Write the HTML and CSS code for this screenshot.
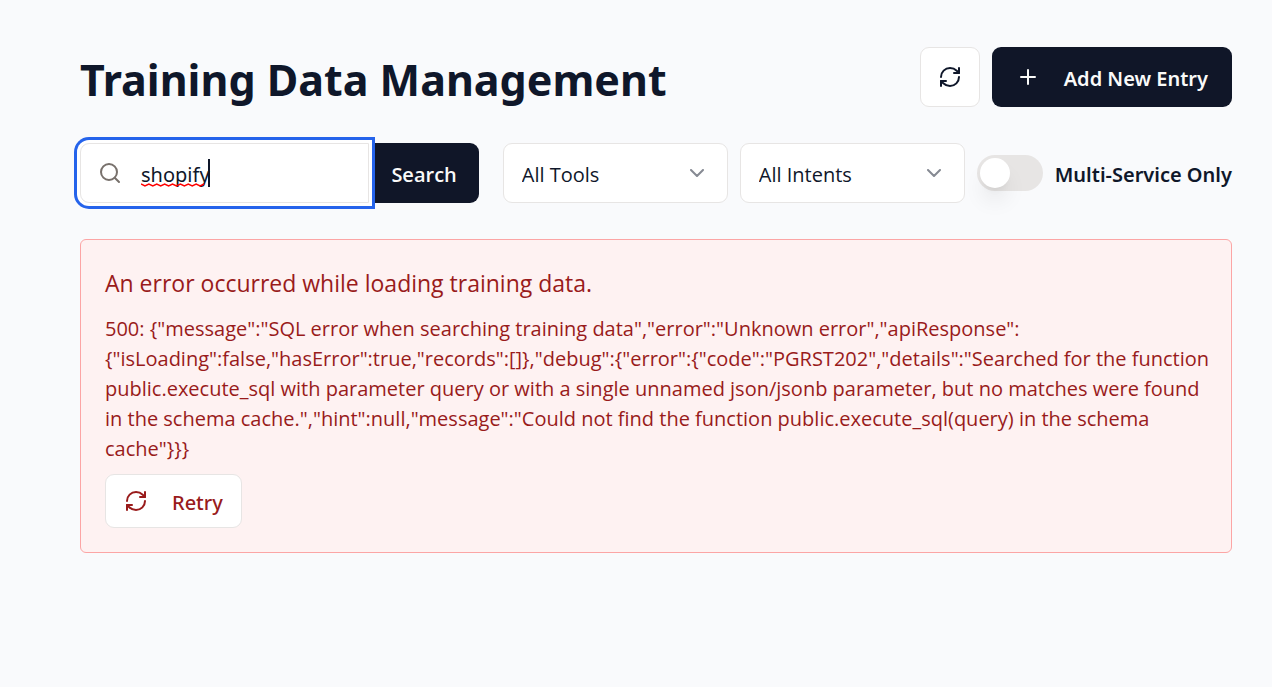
FILE: index.html
```html
<!DOCTYPE html>
<html lang="en">
<head>
<meta charset="utf-8">
<meta name="viewport" content="width=device-width, initial-scale=1">
<title>Training Data Management</title>
<link rel="stylesheet" href="styles.css">
</head>
<body>
<svg class="sprite" aria-hidden="true">
  <symbol id="refresh" viewBox="0 0 24 24"><path d="M3 12a9 9 0 0 1 9-9 9.75 9.75 0 0 1 6.74 2.74L21 8"/><path d="M21 3v5h-5"/><path d="M21 12a9 9 0 0 1-9 9 9.75 9.75 0 0 1-6.74-2.74L3 16"/><path d="M8 16H3v5"/></symbol>
  <symbol id="chevron" viewBox="0 0 24 24"><path d="m6 9 6 6 6-6"/></symbol>
</svg>
<main class="page">
  <header class="header">
    <h1 class="title">Training Data Management</h1>
    <div class="actions">
      <button class="button button-outline button-icon" type="button" aria-label="Refresh"><svg class="icon" aria-hidden="true"><use href="#refresh"/></svg></button>
      <button class="button button-primary" type="button"><svg class="icon" viewBox="0 0 24 24" aria-hidden="true"><path d="M5 12h14M12 5v14"/></svg><span class="label">Add New Entry</span></button>
    </div>
  </header>

  <div class="filters">
    <form class="search">
      <div class="search-field">
        <input class="search-input" id="search" type="text" value="shopify" aria-label="Search training data">
        <svg class="icon search-icon" viewBox="0 0 24 24" aria-hidden="true"><circle cx="11" cy="11" r="8"/><path d="m21 21-4.3-4.3"/></svg>
        <span class="caret" aria-hidden="true"><svg class="squiggle" viewBox="0 0 68 4"><path d="M0 1l4 2 4-2 4 2 4-2 4 2 4-2 4 2 4-2 4 2 4-2 4 2 4-2 4 2 4-2 4 2 4-2"/></svg></span>
      </div>
      <button class="button button-primary search-button" type="button"><span class="label">Search</span></button>
    </form>
    <div class="select-wrap">
      <select class="select" aria-label="Tool"><option>All Tools</option></select>
      <svg class="icon chevron" aria-hidden="true"><use href="#chevron"/></svg>
    </div>
    <div class="select-wrap">
      <select class="select" aria-label="Intent"><option>All Intents</option></select>
      <svg class="icon chevron" aria-hidden="true"><use href="#chevron"/></svg>
    </div>
    <div class="toggle">
      <input class="switch" id="multi" type="checkbox" role="switch">
      <label class="label" for="multi">Multi-Service Only</label>
    </div>
  </div>

  <section class="alert" role="alert">
    <h2 class="alert-title">An error occurred while loading training data.</h2>
    <p class="alert-text">500: {"message":"SQL error when searching training data","error":"Unknown error","apiResponse":{"isLoading":false,"hasError":true,"records":[]},"debug":{"error":{"code":"PGRST202","details":"Searched for the function public.execute_sql with parameter query or with a single unnamed json/jsonb parameter, but no matches were found in the schema cache.","hint":null,"message":"Could not find the function public.execute_sql(query) in the schema cache"}}}</p>
    <button class="button button-outline button-retry" type="button"><svg class="icon" aria-hidden="true"><use href="#refresh"/></svg><span class="label">Retry</span></button>
  </section>
</main>
</body>
</html>
```
FILE: styles.css
```css
:root {
  --ink: #0f172a;
  --navy: #101628;
  --line: #e7e5e4;
  --danger: #991b1b;
}
* { box-sizing: border-box; }
body {
  margin: 0;
  background: #f9fafc;
  color: var(--ink);
  font: 400 20px/30px "Noto Sans", "Open Sans", sans-serif;
}
.sprite { display: none; }
.page { padding: 47px 40px 40px 80px; }
.header, .actions, .filters, .toggle, .search { display: flex; align-items: center; }
.header { justify-content: space-between; margin-bottom: 36px; }
.title { margin: 0; padding-top: 6px; font-size: 43px; line-height: 54px; font-weight: 700; }
.actions { gap: 12px; }
.icon {
  width: 24px;
  height: 24px;
  flex: none;
  fill: none;
  stroke: currentColor;
  stroke-width: 2;
  stroke-linecap: round;
  stroke-linejoin: round;
}
.button {
  display: inline-flex;
  align-items: center;
  justify-content: center;
  gap: 24px;
  height: 60px;
  padding: 0 24px;
  border: 0;
  border-radius: 9px;
  font: inherit;
  white-space: nowrap;
}
.label { padding-top: 3px; font-weight: 600; white-space: nowrap; }
.button-primary { background: var(--navy); color: #fafaf9; }
.button-outline { background: #fff; border: 1px solid var(--line); color: inherit; }
.button-icon { width: 60px; padding: 0; }
.button-retry { height: 54px; padding: 0 18px; font-family: "Noto Sans", sans-serif; }
.button-retry .label { font-weight: 500; }
.filters { gap: 12px; margin-bottom: 36px; }
.search { flex: 1; min-width: 0; margin-right: 12px; }
.search-field { position: relative; z-index: 1; flex: 1; min-width: 0; }
.search-input {
  display: block;
  width: 100%;
  height: 60px;
  padding: 2px 18px 0 60px;
  border: 1px solid var(--line);
  border-radius: 9px 0 0 9px;
  outline: 0;
  background: #fff;
  color: inherit;
  font: inherit;
  box-shadow: 0 0 0 3px #fff, 0 0 0 6px #2563eb;
}
.search-icon { position: absolute; left: 18px; top: 18px; color: #78716c; }
.caret {
  position: absolute;
  left: 61px;
  top: 16px;
  width: 69px;
  height: 28px;
  border-right: 2px solid var(--ink);
}
.squiggle {
  position: absolute;
  left: 0;
  bottom: 0;
  width: 67px;
  height: 4px;
  fill: none;
  stroke: #f00;
  stroke-width: 1.5;
}
.search-button { padding: 0 22px; border-radius: 0 9px 9px 0; }
.search-button .label { font-family: "Open Sans", sans-serif; }
.select-wrap { position: relative; width: 225px; flex: none; }
.select {
  display: block;
  width: 100%;
  height: 60px;
  padding: 3px 48px 0 18px;
  border: 1px solid var(--line);
  border-radius: 9px;
  appearance: none;
  background: #fff;
  color: inherit;
  font: inherit;
  font-family: "Open Sans", sans-serif;
}
.chevron { position: absolute; right: 19px; top: 18px; opacity: .5; pointer-events: none; }
.toggle { gap: 12px; flex: none; }
.switch {
  display: flex;
  align-items: center;
  width: 66px;
  height: 36px;
  margin: 0;
  padding: 3px;
  border-radius: 18px;
  appearance: none;
  background: var(--line);
}
.switch::before {
  content: "";
  width: 30px;
  height: 30px;
  border-radius: 50%;
  background: #fff;
  box-shadow: 0 15px 22px -4px rgba(0, 0, 0, .1), 0 6px 9px -6px rgba(0, 0, 0, .1);
}
.switch:checked { justify-content: flex-end; background: var(--ink); }
.alert {
  padding: 24px 16px 24px 24px;
  border: 1px solid #fca5a5;
  border-radius: 6px;
  background: #fef2f2;
  color: var(--danger);
  font-family: "Open Sans", sans-serif;
}
.alert-title { margin: 0 0 12px; font-size: 23px; line-height: 38px; font-weight: 400; }
.alert-text { margin: 0 0 10px; overflow-wrap: break-word; }
```
